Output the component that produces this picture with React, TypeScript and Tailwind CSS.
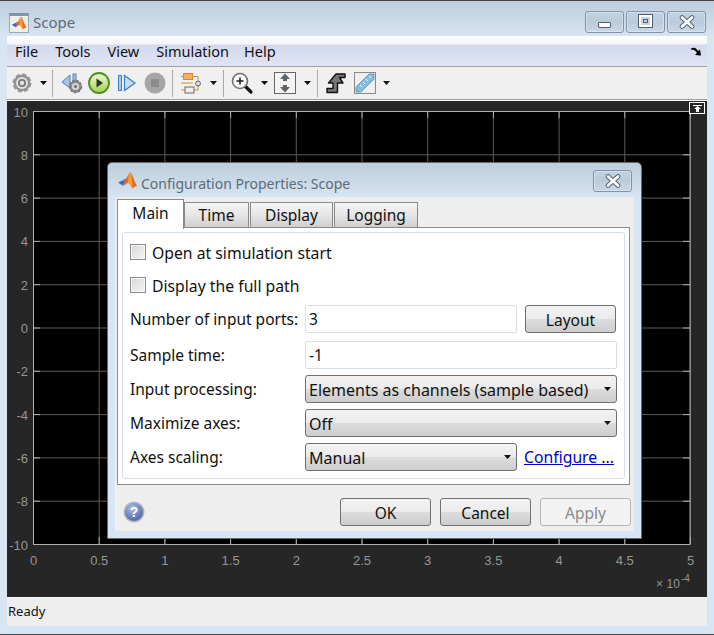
import React from 'react';

const uiFont = "font-['Noto_Sans',sans-serif]";
const btnFace =
  'bg-[linear-gradient(#f3f3f3,#ebebeb_48%,#dcdcdc_52%,#cdcdcd)] border border-[#707070] rounded-[3px]';
const xTicks = ['0', '0.5', '1', '1.5', '2', '2.5', '3', '3.5', '4', '4.5', '5'];
const yTicks = ['10', '8', '6', '4', '2', '0', '-2', '-4', '-6', '-8', '-10'];

const MatlabLogo = ({ size }: { size: number }) => (
  <svg width={size} height={size} viewBox="0 0 20 20">
    <path d="M1 11 L6 8.5 L8 10.5 L5.5 14 Z" fill="#3b6fb5" />
    <path d="M6 8.5 L9 7 L11 3 L8 10.5 Z" fill="#c9562a" />
    <path d="M11 3 C12 1.5 13 1 13.5 2 C15 5 17 11 19.5 15 C17.5 14 16 15 15 17 C13 14 12 12 10.5 11 C9 12 7 14 5.5 14 L8 10.5 Z" fill="#e8662a" />
    <path d="M11 3 C12 1.5 13 1 13.5 2 C14 6 15 12 15 17 C13 14 12 12 10.5 11 Z" fill="#f0a030" />
  </svg>
);

const Caret = ({ className = '' }: { className?: string }) => (
  <svg width="7" height="4" viewBox="0 0 7 4" className={className}>
    <path d="M0 0 H7 L3.5 4 Z" fill="#111" />
  </svg>
);

const Sep = ({ className = '' }: { className?: string }) => (
  <div className={`w-px h-[27px] bg-[#a8a8a8] ${className}`} />
);

const Gear = () => (
  <svg width="24" height="24" viewBox="0 0 24 24">
    <circle cx="12" cy="12" r="8.7" fill="none" stroke="#9a9a9a" strokeWidth="1.6" strokeDasharray="4.6 2.2" />
    <circle cx="12" cy="12" r="8.2" fill="#8f8f8f" />
    <circle cx="12" cy="12" r="6" fill="#e2e2e2" />
    <circle cx="12" cy="12" r="4" fill="#7a7a7a" />
    <circle cx="12" cy="12" r="2.2" fill="#e4e4e4" />
  </svg>
);

const BackGear = () => (
  <svg width="24" height="24" viewBox="0 0 24 24">
    <path d="M1 11 L9 4 V17 Z" fill="#a9c4e2" stroke="#4d7fb5" strokeWidth="1" />
    <rect x="12" y="3" width="3" height="8" fill="#a9c4e2" stroke="#4d7fb5" strokeWidth="1" />
    <circle cx="14.5" cy="15.5" r="6" fill="#8a8a8a" stroke="#777" strokeWidth="1.4" strokeDasharray="3 1" />
    <circle cx="14.5" cy="15.5" r="3.6" fill="#d8d8d8" />
    <circle cx="14.5" cy="15.5" r="1.7" fill="#777" />
  </svg>
);

const Play = () => (
  <svg width="24" height="24" viewBox="0 0 24 24">
    <defs>
      <linearGradient id="pg" x1="0" y1="0" x2="0" y2="1">
        <stop offset="0" stopColor="#f2f8d8" />
        <stop offset="1" stopColor="#a8d050" />
      </linearGradient>
    </defs>
    <circle cx="12" cy="12" r="10" fill="url(#pg)" stroke="#4c8c22" strokeWidth="1.8" />
    <path d="M9.5 7.5 L16 12 L9.5 16.5 Z" fill="#2c3a20" />
  </svg>
);

const Step = () => (
  <svg width="24" height="24" viewBox="0 0 24 24">
    <rect x="4.5" y="4.5" width="3" height="15" fill="#a9c9ea" stroke="#3f7fbe" strokeWidth="1" />
    <path d="M10.5 4.5 L21 12 L10.5 19.5 Z" fill="#c4dcf2" stroke="#3f7fbe" strokeWidth="1.2" />
  </svg>
);

const Stop = () => (
  <svg width="24" height="24" viewBox="0 0 24 24">
    <circle cx="12" cy="12" r="10.5" fill="#a6a6a6" />
    <rect x="8" y="8" width="8" height="8" fill="#8c8c8c" />
  </svg>
);

const Blocks = () => (
  <svg width="24" height="24" viewBox="0 0 24 24">
    <rect x="3.5" y="2.5" width="9" height="6" fill="#f4b060" stroke="#d98a2e" strokeWidth="1" />
    <rect x="5" y="16" width="9" height="6" fill="#eee" stroke="#666" strokeWidth="1" />
    <path d="M12.5 5.5 H18 V10 M14 19 H18 V15 M1 19 H5 M1 5.5 H3.5 M1 12 H13" fill="none" stroke="#d98a2e" strokeWidth="1" />
    <circle cx="18" cy="12.5" r="2.5" fill="#ddd" stroke="#666" strokeWidth="1" />
  </svg>
);

const Zoom = () => (
  <svg width="24" height="24" viewBox="0 0 24 24">
    <path d="M15 15 L21 21" stroke="#111" strokeWidth="3.2" strokeLinecap="round" />
    <circle cx="10" cy="10" r="7.5" fill="#f6f8fa" stroke="#6c7478" strokeWidth="1.6" />
    <path d="M10 6.5 V13.5 M6.5 10 H13.5" stroke="#222" strokeWidth="1.6" />
  </svg>
);

const Fit = () => (
  <svg width="24" height="24" viewBox="0 0 24 24">
    <rect x="1.5" y="1.5" width="21" height="21" fill="#f4f4f4" stroke="#666" strokeWidth="1" />
    <path d="M12 2.5 L7 8 H10 V10 H14 V8 H17 Z M12 21.5 L7 16 H10 V14 H14 V16 H17 Z" fill="#5a6468" />
  </svg>
);

const Signal = () => (
  <svg width="24" height="24" viewBox="0 0 24 24">
    <path d="M3 21.5 V17.5 H9 V12 H4.5 L12 3 H21 V6.5 H15.5 L19 12 H13.5 V21.5 Z" fill="#777" stroke="#111" strokeWidth="1.4" strokeLinejoin="round" />
  </svg>
);

const Ruler = () => (
  <svg width="24" height="24" viewBox="0 0 24 24">
    <rect x="1.5" y="1.5" width="21" height="21" fill="#efefef" stroke="#888" strokeWidth="1" />
    <path d="M3 16 L16 3 H21 V8 L8 21 H3 Z" fill="#86bcdc" stroke="#5a8cae" strokeWidth="0.8" />
    <path d="M7 14 L9 16 M10 11 L12 13 M13 8 L15 10 M16 5 L18 7" stroke="#fff" strokeWidth="1" />
  </svg>
);

const CaptionButton = ({ children, className = '' }: { children: React.ReactNode; className?: string }) => (
  <div className={`w-[39px] h-[22px] rounded-[3px] border border-[#7f93ab] shadow-[inset_0_0_0_1px_rgba(255,255,255,0.35)] bg-[linear-gradient(#c3d2e1,#bccbdc_50%,#c9d7e6)] flex items-center justify-center ${className}`}>
    {children}
  </div>
);

const CloseGlyph = () => (
  <svg width="16" height="14" viewBox="0 0 16 14">
    <path d="M3 2.5 L13 11.5 M13 2.5 L3 11.5" stroke="#4f5f70" strokeWidth="4.6" strokeLinecap="round" />
    <path d="M3 2.5 L13 11.5 M13 2.5 L3 11.5" stroke="#fff" strokeWidth="2.8" strokeLinecap="round" />
  </svg>
);

const Checkbox = ({ label, className = '' }: { label: string; className?: string }) => (
  <div className={`flex items-center h-[24px] ${className}`}>
    <div className="w-[16px] h-[16px] border border-[#8a8a8a] bg-[linear-gradient(135deg,#d8d8d8,#f4f4f4)] shadow-[inset_0_0_0_1px_#f8f8f8]" />
    <span className="ml-[6px] pt-[4px] text-[15.75px]">{label}</span>
  </div>
);

const Label = ({ children }: { children: React.ReactNode }) => (
  <div className="w-[175px] shrink-0 pt-[2px]">{children}</div>
);

const Select = ({ value, className = '' }: { value: string; className?: string }) => (
  <div className={`h-[28px] flex items-center justify-between pl-[3px] pr-[5px] ${btnFace} ${className}`}>
    <span className="pt-[2px] text-[16px]">{value}</span>
    <Caret />
  </div>
);

const Button = ({ label, className = '' }: { label: string; className?: string }) => (
  <div className={`w-[91px] h-[28px] pt-[3px] flex items-center justify-center ${btnFace} ${className}`}>{label}</div>
);

const tabClass =
  'h-[25px] mt-[3px] pt-[1px] flex items-center justify-center border border-b-0 border-[#8a8a8a] bg-[linear-gradient(#f5f5f5,#e6e6e6_50%,#cfcfcf)]';

const PlotArea = () => (
  <svg width="700" height="496" viewBox="0 0 700 496" className="block">
    <rect x="26" y="10" width="657" height="433" fill="#000" />
    {xTicks.map((t, i) => {
      const x = 26.5 + i * 65.7;
      return (
        <g key={t}>
          <line x1={x} x2={x} y1="10" y2="443" stroke="#5c5c5c" />
          <line x1={x} x2={x} y1="10" y2="17" stroke="#b0b0b0" />
          <line x1={x} x2={x} y1="436" y2="443" stroke="#b0b0b0" />
          <text x={x} y="464" textAnchor="middle" fontSize="13" fill="#969696" fontFamily="Liberation Sans">
            {t}
          </text>
        </g>
      );
    })}
    {yTicks.map((t, i) => {
      const y = 10.5 + i * 43.3;
      return (
        <g key={t}>
          <line x1="26" x2="683" y1={y} y2={y} stroke="#5c5c5c" />
          <line x1="26" x2="33" y1={y} y2={y} stroke="#b0b0b0" />
          <line x1="676" x2="683" y1={y} y2={y} stroke="#b0b0b0" />
          <text x="21" y={y + 5} textAnchor="end" fontSize="13" fill="#969696" fontFamily="Liberation Sans">
            {t}
          </text>
        </g>
      );
    })}
    <rect x="26.5" y="10.5" width="656.5" height="433" fill="none" stroke="#b0b0b0" />
    <text x="649" y="487" fontSize="12" fill="#969696" fontFamily="Liberation Sans">
      ×
    </text>
    <text x="659.5" y="487" fontSize="12" fill="#969696" fontFamily="Liberation Sans">
      10
    </text>
    <text x="674" y="481" fontSize="10" fill="#969696" fontFamily="Liberation Sans">
      -4
    </text>
  </svg>
);

const ConfigDialog = () => (
  <div className={`absolute left-[107px] top-[161px] w-[535px] h-[377px] flex flex-col rounded-t-[5px] border border-[#6a6a6a] bg-[linear-gradient(#bccddc,#d8e5f2_35px)] text-[15.5px] text-[#111] ${uiFont}`}>
    <div className="h-[34px] shrink-0 flex items-center pl-[9px] pr-[9px]">
      <div className="mt-[2px]">
        <MatlabLogo size={21} />
      </div>
      <span className="ml-[3px] mt-[6px] text-[14px] text-[#5b6b78]">Configuration Properties: Scope</span>
      <CaptionButton className="ml-auto mt-[2px]">
        <CloseGlyph />
      </CaptionButton>
    </div>
    <div className="flex-1 mx-[7px] mb-[7px] bg-[#eeeeee] flex flex-col">
      <div className="flex h-[30px] pl-[2px] pt-[2px] shrink-0 items-start relative z-10">
        <div className="w-[67px] h-[30px] pt-[1px] flex items-center justify-center border border-b-0 border-[#8a8a8a] bg-white">
          <span className="pb-[3px]">Main</span>
        </div>
        <div className={`w-[65px] ${tabClass}`}>Time</div>
        <div className={`w-[83px] ml-[1px] ${tabClass}`}>Display</div>
        <div className={`w-[84px] ml-[1px] ${tabClass}`}>Logging</div>
      </div>
      <div className="ml-[2px] w-[513px] h-[258px] border border-[#8a8a8a] bg-white p-[4px]">
        <div className="h-[247px] border border-[#d5dfe8] rounded-[3px] pl-[7px] pt-[7px]">
          <Checkbox label="Open at simulation start" />
          <Checkbox label="Display the full path" className="mt-[9px]" />
          <div className="flex items-center mt-[8px]">
            <Label>Number of input ports:</Label>
            <div className="w-[212px] h-[28px] pt-[2px] border border-[#d5dfe8] rounded-[2px] flex items-center pl-[3px]">3</div>
            <Button label="Layout" className="ml-[8px]" />
          </div>
          <div className="flex items-center mt-[8px]">
            <Label>Sample time:</Label>
            <div className="w-[312px] h-[28px] pt-[2px] border border-[#d5dfe8] rounded-[2px] flex items-center pl-[3px]">-1</div>
          </div>
          <div className="flex items-center mt-[6px]">
            <Label>Input processing:</Label>
            <Select value="Elements as channels (sample based)" className="w-[312px]" />
          </div>
          <div className="flex items-center mt-[6px]">
            <Label>Maximize axes:</Label>
            <Select value="Off" className="w-[312px]" />
          </div>
          <div className="flex items-center mt-[6px]">
            <Label>Axes scaling:</Label>
            <Select value="Manual" className="w-[212px]" />
            <a className="ml-[7px] pt-[2px] text-[15.75px] text-[#0000c8] underline">Configure ...</a>
          </div>
        </div>
      </div>
      <div className="flex items-center flex-1 pl-[8px] pr-[3px] pt-[8px]">
        <svg width="22" height="22" viewBox="0 0 22 22">
          <defs>
            <radialGradient id="hg" cx="0.4" cy="0.3" r="0.8">
              <stop offset="0" stopColor="#aebfe8" />
              <stop offset="1" stopColor="#3f5aa8" />
            </radialGradient>
          </defs>
          <circle cx="11" cy="11" r="10.5" fill="#b8b8b8" />
          <circle cx="11" cy="11" r="9" fill="url(#hg)" />
          <text x="11" y="16" textAnchor="middle" fontSize="14" fontWeight="700" fill="#fff" fontFamily="Liberation Sans">
            ?
          </text>
        </svg>
        <Button label="OK" className="ml-auto" />
        <Button label="Cancel" className="ml-[9px]" />
        <div className="ml-[9px] w-[91px] h-[28px] pt-[3px] flex items-center justify-center rounded-[3px] border border-[#b5b5b5] bg-[#f2f2f2] text-[#8a8a8a]">Apply</div>
      </div>
    </div>
  </div>
);

export default function App() {
  return (
    <div className={`relative w-[714px] h-[635px] overflow-hidden flex flex-col border-t border-b border-[#444] bg-[linear-gradient(#bccddc,#d8e5f2_36px)] ${uiFont}`}>
      {/* title bar */}
      <div className="h-[35px] shrink-0 flex items-end pb-[3px] pl-[9px] pr-[8px]">
        <div className="w-[20px] h-[20px] bg-[#eee] border border-[#9aa8b5] border-t-[3px] border-t-[#7f95ab] flex items-center justify-center">
          <MatlabLogo size={16} />
        </div>
        <span className="ml-[4px] text-[15px] text-[#5b6b78]">Scope</span>
        <div className="ml-auto flex gap-[2px]">
          <CaptionButton>
            <div className="w-[13px] h-[6px] mt-[5px] bg-white border border-[#4f5f70] rounded-[1px]" />
          </CaptionButton>
          <CaptionButton>
            <div className="w-[13px] h-[12px] mb-[2px] bg-[#c5d3e2] border-2 border-white outline outline-1 outline-[#4f5f70] flex items-center justify-center">
              <div className="w-[5px] h-[4px] border border-[#4f5f70]" />
            </div>
          </CaptionButton>
          <CaptionButton>
            <CloseGlyph />
          </CaptionButton>
        </div>
      </div>

      <div className="mx-[7px] w-[700px] h-[590px] flex flex-col">
        {/* menu */}
        <div className="relative h-[31px] shrink-0 flex items-center gap-[17px] pl-[8px] pt-[2px] border-b border-[#a0a0a0] bg-[linear-gradient(#ffffff,#f4f5fb_8px,#d3daee_9px,#e0e4f4)] text-[14.5px] text-[#111]">
          <span>File</span>
          <span>Tools</span>
          <span>View</span>
          <span>Simulation</span>
          <span className="-ml-[2px]">Help</span>
          <svg width="11" height="9" viewBox="0 0 11 9" className="absolute right-[5px] top-[11px]">
            <path d="M0 1.5 C3 0 5 1 7 4 L9 2.5 L10 8.5 L4 8 L6 6 C4.5 3.5 3 2.5 0 2.5 Z" fill="#000" />
          </svg>
        </div>

        {/* toolbar */}
        <div className="h-[33px] shrink-0 flex items-center bg-[#f0f0f0] border-b border-[#a0a0a0]">
          <div className="ml-[3px]"><Gear /></div>
          <Caret className="ml-[6px]" />
          <Sep className="ml-[5px]" />
          <div className="ml-[8px]"><BackGear /></div>
          <div className="ml-[2px]"><Play /></div>
          <div className="ml-[3px]"><Step /></div>
          <div className="ml-[5px]"><Stop /></div>
          <Sep className="ml-[5px]" />
          <div className="ml-[7px]"><Blocks /></div>
          <Caret className="ml-[6px]" />
          <Sep className="ml-[6px]" />
          <div className="ml-[6px]"><Zoom /></div>
          <Caret className="ml-[7px]" />
          <div className="ml-[5px]"><Fit /></div>
          <Caret className="ml-[7px]" />
          <Sep className="ml-[6px]" />
          <div className="ml-[6px]"><Signal /></div>
          <div className="ml-[5px]"><Ruler /></div>
          <Caret className="ml-[6px]" />
        </div>

        {/* plot */}
        <div className="relative flex-1 bg-[#262626] border-t border-[#f8f8f8] overflow-hidden">
          <PlotArea />
          <div className="absolute right-[2px] top-[1px] w-[16px] h-[12px] border border-white bg-[#262626] flex items-center justify-center">
            <svg width="9" height="7" viewBox="0 0 9 7">
              <path d="M0 0 H9 V1 H0 Z M4.5 1 L8 4 H6 V7 H3 V4 H1 Z" fill="#fff" />
            </svg>
          </div>
        </div>

        {/* status */}
        <div className="h-[29px] shrink-0 bg-[#eeeeee] border-t border-[#f8f8f8] flex items-center pl-[1px] text-[13px] text-[#111]">
          Ready
        </div>
      </div>

      <ConfigDialog />
    </div>
  );
}
